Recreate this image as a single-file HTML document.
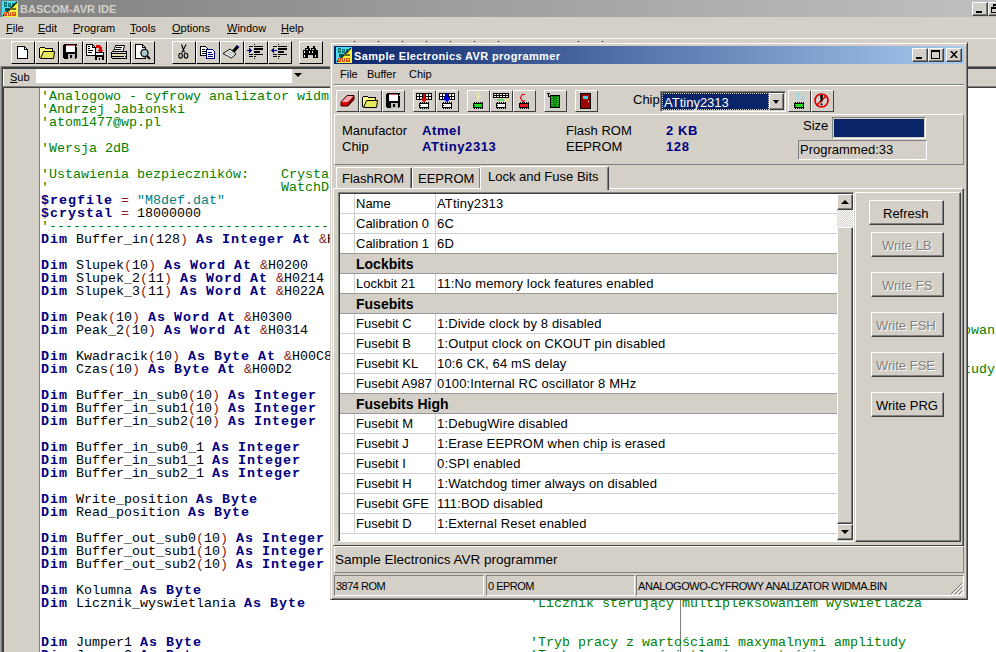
<!DOCTYPE html>
<html><head><meta charset="utf-8">
<style>
*{box-sizing:border-box}
html,body{margin:0;padding:0}
body{width:996px;height:652px;overflow:hidden;position:relative;background:#d4d0c8;font-family:"Liberation Sans",sans-serif;color:#000}
.a{position:absolute}
.t{position:absolute;white-space:pre;line-height:1}
/* raised button win2000 */
.rb{position:absolute;background:#d4d0c8;border-top:1px solid #fff;border-left:1px solid #fff;border-right:1px solid #404040;border-bottom:1px solid #404040;box-shadow:inset -1px -1px 0 #808080}
.sunk{position:absolute;border-top:1px solid #808080;border-left:1px solid #808080;border-right:1px solid #fff;border-bottom:1px solid #fff}
.tb{position:absolute;width:24px;height:23px;background:#d4d0c8;border-top:1px solid #fff;border-left:1px solid #fff;border-right:1px solid #000;border-bottom:1px solid #000}
.tb svg{position:absolute;left:3px;top:2px}
.code{position:absolute;left:41px;font-family:"Liberation Mono",monospace;font-size:13.333px;line-height:13px;white-space:pre;color:#000}
.k{color:#000080;font-weight:bold;letter-spacing:1px}
.c{color:#008000}
.o{color:#8b2424}
.s{color:#008080}
.mi{position:absolute;font-size:11px;top:23px;line-height:1}
.u{text-decoration:underline}
</style></head><body>

<!-- MAIN TITLE -->
<div class="a" style="left:0;top:0;width:996px;height:17px;background:linear-gradient(to right,#808080,#c0c0c0)"></div>
<div id="mainicon" class="a" style="left:2px;top:1px;width:16px;height:16px"><svg width="16" height="16" viewBox="0 0 16 16" shape-rendering="crispEdges" style="position:absolute;left:0;top:0"><rect width="16" height="16" fill="#f8f040"/><path d="M0 0H16L0 16Z" fill="#48e0f0"/><path d="M2 1h3v5h-3zM6 2h3v4h-3zM10 2h2v4h-2z" fill="#107878"/><path d="M3 3h1v1h-1zM7 3h1v1h-1z" fill="#48e0f0"/><path d="M15 1L1 15" stroke="#002020" stroke-width="1.4" shape-rendering="auto"/><path d="M3 7h4v3h-4z" fill="#004848"/><path d="M8 7h6v2h-6z" fill="#6a7020"/><path d="M2 11h3v4h-3zM6 11h3v4h-3zM10 11h4v4h-4z" fill="#e05010"/><path d="M3 12h1v1h-1zM7 11h1v3h-1zM11 12h2v1h-2z" fill="#f8f040"/></svg></div>
<div class="t" style="left:20px;top:4px;font-size:11px;font-weight:bold;color:#d4d0c8">BASCOM-AVR IDE</div>
<div class="rb" style="left:972px;top:2px;width:16px;height:14px"></div>
<div class="a" style="left:976px;top:11px;width:6px;height:2px;background:#000"></div>
<div class="rb" style="left:988px;top:2px;width:16px;height:14px"></div>
<div class="a" style="left:993px;top:4px;width:8px;height:6px;border:1px solid #000;border-top-width:2px"></div>
<div class="a" style="left:991px;top:7px;width:8px;height:6px;background:#d4d0c8;border:1px solid #000;border-top-width:2px"></div>

<!-- MAIN MENU -->
<div class="mi" style="left:6px"><span class="u">F</span>ile</div>
<div class="mi" style="left:38px"><span class="u">E</span>dit</div>
<div class="mi" style="left:73px"><span class="u">P</span>rogram</div>
<div class="mi" style="left:130px"><span class="u">T</span>ools</div>
<div class="mi" style="left:172px"><span class="u">O</span>ptions</div>
<div class="mi" style="left:227px"><span class="u">W</span>indow</div>
<div class="mi" style="left:281px"><span class="u">H</span>elp</div>

<!-- toolbar line -->
<div class="a" style="left:0;top:38px;width:996px;height:1px;background:#fff"></div>

<div id="maintb">
<div class="tb" style="left:11px;top:41px"></div>
<div class="tb" style="left:35px;top:41px"></div>
<div class="tb" style="left:59px;top:41px"></div>
<div class="tb" style="left:83px;top:41px"></div>
<div class="tb" style="left:107px;top:41px"></div>
<div class="tb" style="left:131px;top:41px"></div>
<div class="tb" style="left:172px;top:41px"></div>
<div class="tb" style="left:196px;top:41px"></div>
<div class="tb" style="left:220px;top:41px"></div>
<div class="tb" style="left:244px;top:41px"></div>
<div class="tb" style="left:268px;top:41px"></div>
<div class="tb" style="left:299px;top:41px"></div>
<svg class="a" style="left:0;top:0" width="330" height="66" viewBox="0 0 330 66" shape-rendering="crispEdges">
<!-- new -->
<path d="M17.5 46.5H24.5L27.5 49.5V58.5H17.5Z" fill="#fff" stroke="#000"/>
<path d="M24.5 46.5V49.5H27.5" fill="none" stroke="#000"/>
<!-- open -->
<path d="M39.5 57.5V48.5L40.5 47.5H44.5L45.5 48.5H52.5V51" fill="#ffff80" stroke="#000"/>
<path d="M40.5 58.5H53.5L54.5 51.5H43.5Z" fill="#e8e860" stroke="#000" shape-rendering="auto"/>
<!-- save -->
<path d="M63 45h1v-1h13v14h-1v1h-12v-1h-1z" fill="#000"/>
<rect x="66" y="45" width="9" height="7" fill="#fff"/>
<rect x="66" y="45" width="9" height="1" fill="#d06060"/>
<rect x="68" y="54" width="7" height="5" fill="#c0c0c0"/>
<rect x="70" y="55" width="2" height="3" fill="#000"/>
<rect x="76" y="46" width="1" height="1" fill="#fff"/>
<!-- save as -->
<path d="M86.5 44.5H92.5L95.5 47.5V55.5H86.5Z" fill="#fff" stroke="#000"/>
<path d="M92.5 44.5V47.5H95.5" fill="none" stroke="#000"/>
<path d="M88 46h2M88 48h2M88 50h5M88 52h4" stroke="#000"/>
<path d="M96 45h3l2 1l1 2v2h2l-3.5 3l-3.5-3h2v-1l-1-1h-2z" fill="#e00000"/>
<rect x="95" y="52" width="9" height="8" fill="#000"/>
<rect x="96" y="53" width="7" height="2" fill="#fff"/>
<rect x="97" y="57" width="5" height="3" fill="#c0c0c0"/>
<rect x="99" y="58" width="1" height="2" fill="#000"/>
<!-- print -->
<path d="M115.5 45.5H124.5L123 51.5H113.5Z" fill="#fff" stroke="#000" shape-rendering="auto"/>
<path d="M116 47h6M115 49h6" stroke="#000"/>
<path d="M112.5 51.5H126.5V58.5H112.5L111.5 57.5V52.5Z" fill="#d4d0c8" stroke="#000"/>
<rect x="112" y="54" width="11" height="2" fill="#e8e0b0"/>
<path d="M112 53.5h14M112 56.5h14" stroke="#000"/>
<path d="M124 52h1v1h-1zM125 54h1v1h-1zM124 56h1v1h-1z" fill="#fff"/>
<!-- preview -->
<path d="M135.5 44.5H142.5L145.5 47.5V58.5H135.5Z" fill="#fff" stroke="#000"/>
<path d="M142.5 44.5V47.5H145.5" fill="none" stroke="#000"/>
<circle cx="144.5" cy="53" r="3.6" fill="#a8c8c8" stroke="#000" stroke-width="1.2" shape-rendering="auto"/>
<path d="M147 56l3 3" stroke="#000" stroke-width="2" shape-rendering="auto"/>
<!-- cut -->
<g shape-rendering="auto" fill="none" stroke="#000" stroke-width="1.1">
<path d="M181.5 44.5L184.5 52.5M186 44.5L182 52.5"/>
<ellipse cx="180.6" cy="55.7" rx="1.8" ry="2.4"/>
<ellipse cx="186" cy="55.7" rx="1.8" ry="2.4"/>
</g>
<!-- copy -->
<path d="M200.5 46.5H205.5L207.5 48.5V55.5H200.5Z" fill="#fff" stroke="#000"/>
<path d="M202 49h3M202 51h4M202 53h4" stroke="#000"/>
<path d="M206.5 49.5H212.5L214.5 51.5V58.5H206.5Z" fill="#fff" stroke="#000080"/>
<path d="M208 52h4M208 54h5M208 56h5" stroke="#000080"/>
<!-- brush -->
<g shape-rendering="auto">
<path d="M223 53.5L230 49L236 54L231.5 58Z" fill="#fff" stroke="#000" stroke-width="1"/>
<path d="M225 54l5 3.2M226.8 52.5l5 3.4M228.5 51.2l5 3.3" stroke="#808080" stroke-width="0.9"/>
<path d="M232 50.5L236.5 45.5L239 47.5L234.5 52.5Z" fill="#000"/>
<path d="M236.5 45.5L239 47.5" stroke="#000080" stroke-width="1.5"/>
</g>
<!-- indent -->
<rect x="249" y="46" width="4" height="1" fill="#000"/><rect x="254" y="46" width="9" height="1" fill="#000"/><rect x="254" y="48" width="9" height="2" fill="#000"/><rect x="254" y="51" width="6" height="2" fill="#000"/><rect x="249" y="54" width="4" height="1" fill="#000"/><rect x="254" y="54" width="9" height="1" fill="#000"/><rect x="249" y="56" width="4" height="1" fill="#000"/><rect x="254" y="56" width="2" height="1" fill="#000"/><rect x="254" y="44" width="1" height="1" fill="#000"/><rect x="254" y="58" width="1" height="1" fill="#000"/>
<rect x="247" y="50" width="4" height="1" fill="#000080"/><rect x="249" y="48" width="1" height="5" fill="#000080"/><rect x="250" y="49" width="1" height="3" fill="#000080"/><rect x="251" y="50" width="1" height="1" fill="#000080"/>
<!-- outdent -->
<rect x="273" y="46" width="4" height="1" fill="#000"/><rect x="278" y="46" width="9" height="1" fill="#000"/><rect x="278" y="48" width="9" height="2" fill="#000"/><rect x="278" y="51" width="6" height="2" fill="#000"/><rect x="273" y="54" width="4" height="1" fill="#000"/><rect x="278" y="54" width="9" height="1" fill="#000"/><rect x="273" y="56" width="4" height="1" fill="#000"/><rect x="278" y="56" width="2" height="1" fill="#000"/><rect x="278" y="44" width="1" height="1" fill="#000"/><rect x="278" y="58" width="1" height="1" fill="#000"/>
<rect x="272" y="50" width="5" height="1" fill="#000080"/><rect x="273" y="48" width="1" height="5" fill="#000080"/><rect x="272" y="49" width="1" height="3" fill="#000080"/><rect x="271" y="50" width="1" height="1" fill="#000080"/>
<!-- binoculars -->
<rect x="307" y="46" width="2" height="2" fill="#000"/><rect x="313" y="46" width="2" height="2" fill="#000"/><rect x="305" y="48" width="5" height="2" fill="#000"/><rect x="311" y="48" width="5" height="2" fill="#000"/><rect x="303" y="50" width="5" height="8" fill="#000"/><rect x="313" y="50" width="5" height="8" fill="#000"/><rect x="307" y="50" width="6" height="5" fill="#000"/><rect x="304" y="51" width="1" height="2" fill="#fff"/><rect x="309" y="51" width="1" height="2" fill="#e0e0e0"/><rect x="312" y="51" width="1" height="2" fill="#e0e0e0"/><rect x="304" y="55" width="1" height="2" fill="#fff"/><rect x="315" y="55" width="1" height="2" fill="#fff"/><rect x="306" y="49" width="2" height="1" fill="#c0c0c0"/><rect x="312" y="49" width="2" height="1" fill="#c0c0c0"/>
</svg>

</div>

<!-- MDI child frame -->
<div class="a" style="left:0;top:66px;width:996px;height:1px;background:#808080"></div>
<div class="a" style="left:0;top:67px;width:996px;height:2px;background:#404040"></div>
<div class="a" style="left:0;top:66px;width:1px;height:586px;background:#a0a0a0"></div>
<div class="a" style="left:1px;top:66px;width:1px;height:586px;background:#808080"></div>
<div class="a" style="left:2px;top:67px;width:2px;height:585px;background:#404040"></div>

<!-- Sub bar -->
<div class="a" style="left:3px;top:69px;width:993px;height:17px;background:#d4d0c8;border-left:1px solid #fff"></div>
<div class="t" style="left:10px;top:72px;font-size:11px"><span class="u">S</span>ub</div>
<div class="a" style="left:36px;top:69px;width:269px;height:14px;background:#fff"></div>
<div class="a" style="left:292px;top:69px;width:13px;height:14px;background:#d4d0c8"></div>
<div class="a" style="left:294px;top:73px;width:0;height:0;border-left:4px solid transparent;border-right:4px solid transparent;border-top:4px solid #000"></div>

<!-- Editor -->
<div class="a" style="left:3px;top:86px;width:993px;height:1px;background:#808080"></div><div class="a" style="left:3px;top:87px;width:993px;height:1px;background:#404040"></div>
<div class="a" style="left:4px;top:88px;width:35px;height:564px;background:#d4d0c8"></div>
<div class="a" style="left:39px;top:88px;width:1px;height:564px;background:#808080"></div>
<div class="a" style="left:40px;top:88px;width:956px;height:564px;background:#fff"></div>
<div class="a" style="left:680px;top:596px;width:1px;height:56px;background:#808080"></div>

<div id="code">
<div class="code" style="top:90px"><span class="c">&#x27;Analogowo - cyfrowy analizator widma akustycznego</span></div>
<div class="code" style="top:103px"><span class="c">&#x27;Andrzej Jabłonski</span></div>
<div class="code" style="top:116px"><span class="c">&#x27;atom1477@wp.pl</span></div>
<div class="code" style="top:142px"><span class="c">&#x27;Wersja 2dB</span></div>
<div class="code" style="top:168px"><span class="c">&#x27;Ustawienia bezpieczników:    Crystal</span></div>
<div class="code" style="top:181px"><span class="c">&#x27;                             WatchDog</span></div>
<div class="code" style="top:194px"><span class="k">$regfile</span> <span class="o">=</span> <span class="s">&quot;M8def.dat&quot;</span></div>
<div class="code" style="top:207px"><span class="k">$crystal</span> <span class="o">=</span> 18000000</div>
<div class="code" style="top:220px"><span class="c">&#x27;----------------------------------------------------------------------</span></div>
<div class="code" style="top:233px"><span class="k">Dim</span> Buffer_in<span class="o">(</span>128<span class="o">)</span> <span class="k">As</span> <span class="k">Integer</span> <span class="k">At</span> <span class="o">&amp;</span>H0100</div>
<div class="code" style="top:259px"><span class="k">Dim</span> Slupek<span class="o">(</span>10<span class="o">)</span> <span class="k">As</span> <span class="k">Word</span> <span class="k">At</span> <span class="o">&amp;</span>H0200</div>
<div class="code" style="top:272px"><span class="k">Dim</span> Slupek_2<span class="o">(</span>11<span class="o">)</span> <span class="k">As</span> <span class="k">Word</span> <span class="k">At</span> <span class="o">&amp;</span>H0214</div>
<div class="code" style="top:285px"><span class="k">Dim</span> Slupek_3<span class="o">(</span>11<span class="o">)</span> <span class="k">As</span> <span class="k">Word</span> <span class="k">At</span> <span class="o">&amp;</span>H022A</div>
<div class="code" style="top:311px"><span class="k">Dim</span> Peak<span class="o">(</span>10<span class="o">)</span> <span class="k">As</span> <span class="k">Word</span> <span class="k">At</span> <span class="o">&amp;</span>H0300</div>
<div class="code" style="top:324px"><span class="k">Dim</span> Peak_2<span class="o">(</span>10<span class="o">)</span> <span class="k">As</span> <span class="k">Word</span> <span class="k">At</span> <span class="o">&amp;</span>H0314</div>
<div class="code c" style="top:324px;left:963px">owan</div>
<div class="code" style="top:350px"><span class="k">Dim</span> Kwadracik<span class="o">(</span>10<span class="o">)</span> <span class="k">As</span> <span class="k">Byte</span> <span class="k">At</span> <span class="o">&amp;</span>H00C8</div>
<div class="code" style="top:363px"><span class="k">Dim</span> Czas<span class="o">(</span>10<span class="o">)</span> <span class="k">As</span> <span class="k">Byte</span> <span class="k">At</span> <span class="o">&amp;</span>H00D2</div>
<div class="code c" style="top:363px;left:963px">tudy</div>
<div class="code" style="top:389px"><span class="k">Dim</span> Buffer_in_sub0<span class="o">(</span>10<span class="o">)</span> <span class="k">As</span> <span class="k">Integer</span></div>
<div class="code" style="top:402px"><span class="k">Dim</span> Buffer_in_sub1<span class="o">(</span>10<span class="o">)</span> <span class="k">As</span> <span class="k">Integer</span></div>
<div class="code" style="top:415px"><span class="k">Dim</span> Buffer_in_sub2<span class="o">(</span>10<span class="o">)</span> <span class="k">As</span> <span class="k">Integer</span></div>
<div class="code" style="top:441px"><span class="k">Dim</span> Buffer_in_sub0_1 <span class="k">As</span> <span class="k">Integer</span></div>
<div class="code" style="top:454px"><span class="k">Dim</span> Buffer_in_sub1_1 <span class="k">As</span> <span class="k">Integer</span></div>
<div class="code" style="top:467px"><span class="k">Dim</span> Buffer_in_sub2_1 <span class="k">As</span> <span class="k">Integer</span></div>
<div class="code" style="top:493px"><span class="k">Dim</span> Write_position <span class="k">As</span> <span class="k">Byte</span></div>
<div class="code" style="top:506px"><span class="k">Dim</span> Read_position <span class="k">As</span> <span class="k">Byte</span></div>
<div class="code" style="top:532px"><span class="k">Dim</span> Buffer_out_sub0<span class="o">(</span>10<span class="o">)</span> <span class="k">As</span> <span class="k">Integer</span></div>
<div class="code" style="top:545px"><span class="k">Dim</span> Buffer_out_sub1<span class="o">(</span>10<span class="o">)</span> <span class="k">As</span> <span class="k">Integer</span></div>
<div class="code" style="top:558px"><span class="k">Dim</span> Buffer_out_sub2<span class="o">(</span>10<span class="o">)</span> <span class="k">As</span> <span class="k">Integer</span></div>
<div class="code" style="top:584px"><span class="k">Dim</span> Kolumna <span class="k">As</span> <span class="k">Byte</span></div>
<div class="code" style="top:597px"><span class="k">Dim</span> Licznik_wyswietlania <span class="k">As</span> <span class="k">Byte</span></div>
<div class="code c" style="top:597px;left:530px">&#x27;Licznik sterujący multipleksowaniem wyswietlacza</div>
<div class="code" style="top:636px"><span class="k">Dim</span> Jumper1 <span class="k">As</span> <span class="k">Byte</span></div>
<div class="code c" style="top:636px;left:530px">&#x27;Tryb pracy z wartościami maxymalnymi amplitudy</div>
<div class="code" style="top:649px"><span class="k">Dim</span> Jumper2 <span class="k">As</span> <span class="k">Byte</span></div>
<div class="code c" style="top:649px;left:530px">&#x27;Tryb pracy z wyświetlaniem wartości</div>
</div>

<div id="dots"><div class="a" style="left:354px;top:41px;width:1px;height:1px;background:#000"></div><div class="a" style="left:378px;top:41px;width:1px;height:1px;background:#000"></div><div class="a" style="left:402px;top:41px;width:1px;height:1px;background:#000"></div><div class="a" style="left:426px;top:41px;width:1px;height:1px;background:#000"></div><div class="a" style="left:450px;top:41px;width:1px;height:1px;background:#000"></div><div class="a" style="left:474px;top:41px;width:1px;height:1px;background:#000"></div><div class="a" style="left:498px;top:41px;width:1px;height:1px;background:#000"></div><div class="a" style="left:578px;top:41px;width:1px;height:1px;background:#000"></div><div class="a" style="left:602px;top:41px;width:1px;height:1px;background:#000"></div></div>
<div id="dialog">
<!-- DIALOG -->
<div class="a" style="left:330px;top:42px;width:638px;height:558px;background:#d4d0c8;border-top:1px solid #d4d0c8;border-left:1px solid #d4d0c8;border-right:1px solid #404040;border-bottom:1px solid #404040;box-shadow:inset 1px 1px 0 #fff,inset -1px -1px 0 #808080"></div>
<div class="a" style="left:334px;top:46px;width:630px;height:18px;background:linear-gradient(to right,#0a246a,#a6caf0)"></div>
<div id="dlgicon" class="a" style="left:336px;top:47px;width:16px;height:16px"><svg width="16" height="16" viewBox="0 0 16 16" shape-rendering="crispEdges" style="position:absolute;left:0;top:0"><rect width="16" height="16" fill="#f8f040"/><path d="M0 0H16L0 16Z" fill="#48e0f0"/><path d="M2 1h3v5h-3zM6 2h3v4h-3zM10 2h2v4h-2z" fill="#107878"/><path d="M3 3h1v1h-1zM7 3h1v1h-1z" fill="#48e0f0"/><path d="M15 1L1 15" stroke="#002020" stroke-width="1.4" shape-rendering="auto"/><path d="M3 7h4v3h-4z" fill="#004848"/><path d="M8 7h6v2h-6z" fill="#6a7020"/><path d="M2 11h3v4h-3zM6 11h3v4h-3zM10 11h4v4h-4z" fill="#e05010"/><path d="M3 12h1v1h-1zM7 11h1v3h-1zM11 12h2v1h-2z" fill="#f8f040"/></svg></div>
<div class="t" style="left:354px;top:51px;font-size:11px;font-weight:bold;color:#fff;letter-spacing:0.36px">Sample Electronics AVR programmer</div>
<div class="rb" style="left:912px;top:48px;width:16px;height:14px"></div>
<div class="a" style="left:916px;top:57px;width:6px;height:2px;background:#000"></div>
<div class="rb" style="left:928px;top:48px;width:16px;height:14px"></div>
<div class="a" style="left:931px;top:50px;width:9px;height:9px;border:1px solid #000;border-top-width:2px"></div>
<div class="rb" style="left:946px;top:48px;width:16px;height:14px"></div>
<svg class="a" style="left:950px;top:51px" width="8" height="7" viewBox="0 0 8 7"><path d="M0 0h2l2 2.5L6 0h2L5 3.5L8 7H6L4 4.5L2 7H0l3-3.5z" fill="#000"/></svg>

<!-- dialog menu -->
<div class="t" style="left:340px;top:69px;font-size:11px">File</div>
<div class="t" style="left:367px;top:69px;font-size:11px">Buffer</div>
<div class="t" style="left:409px;top:69px;font-size:11px">Chip</div>
<div class="a" style="left:334px;top:84px;width:630px;height:1px;background:#808080"></div>
<div class="a" style="left:334px;top:85px;width:630px;height:1px;background:#fff"></div>

<!-- dialog toolbar -->
<div id="dlgtb">
<div class="tb" style="left:336px;top:90px;width:23px;height:22px;border-right-color:#404040;border-bottom-color:#404040"></div>
<div class="tb" style="left:359px;top:90px;width:23px;height:22px;border-right-color:#404040;border-bottom-color:#404040"></div>
<div class="tb" style="left:382px;top:90px;width:23px;height:22px;border-right-color:#404040;border-bottom-color:#404040"></div>
<div class="tb" style="left:413px;top:90px;width:23px;height:22px;border-right-color:#404040;border-bottom-color:#404040"></div>
<div class="tb" style="left:436px;top:90px;width:23px;height:22px;border-right-color:#404040;border-bottom-color:#404040"></div>
<div class="tb" style="left:467px;top:90px;width:23px;height:22px;border-right-color:#404040;border-bottom-color:#404040"></div>
<div class="tb" style="left:490px;top:90px;width:23px;height:22px;border-right-color:#404040;border-bottom-color:#404040"></div>
<div class="tb" style="left:513px;top:90px;width:23px;height:22px;border-right-color:#404040;border-bottom-color:#404040"></div>
<div class="tb" style="left:544px;top:90px;width:23px;height:22px;border-right-color:#404040;border-bottom-color:#404040"></div>
<div class="tb" style="left:575px;top:90px;width:23px;height:22px;border-right-color:#404040;border-bottom-color:#404040"></div>
<div class="tb" style="left:788px;top:90px;width:23px;height:22px;border-right-color:#404040;border-bottom-color:#404040"></div>
<div class="tb" style="left:811px;top:90px;width:23px;height:22px;border-right-color:#404040;border-bottom-color:#404040"></div>
<svg class="a" style="left:330px;top:86px" width="520" height="28" viewBox="330 86 520 28" shape-rendering="crispEdges"><g shape-rendering="auto"><path d="M347 95.5H354L348 102H341Z" fill="#ff9090"/><path d="M348 96.5l1 1M350 96.5l1 1M346 98.5l1 1M348 98.5l1 1M350 98.5l1 1M344 100.5l1 1M346 100.5l1 1" stroke="#fff" stroke-width="1"/><path d="M341 102H348V106H341Z" fill="#e00000"/><path d="M348 102L354 95.5V99.5L348 106Z" fill="#900000"/><path d="M347 95.5H354V99.5L348 106H341V102Z" fill="none" stroke="#300000" stroke-width="1"/></g>
<path d="M362.5 106.5V97.5L363.5 96.5H367.5L368.5 97.5H375.5V100" fill="#ffff80" stroke="#000"/><path d="M363.5 107.5H376.5L377.5 100.5H366.5Z" fill="#e8e860" stroke="#000" shape-rendering="auto"/>
<path d="M386 94h1v-1h13v14h-1v1h-12v-1h-1z" fill="#000"/><rect x="389" y="94" width="9" height="7" fill="#fff"/><rect x="389" y="94" width="9" height="1" fill="#d06060"/><rect x="391" y="103" width="7" height="5" fill="#c0c0c0"/><rect x="393" y="104" width="2" height="3" fill="#000"/><rect x="399" y="95" width="1" height="1" fill="#fff"/>
<rect x="416" y="93" width="16" height="7" fill="#000"/><rect x="417" y="94" width="2" height="2" fill="#fff"/><rect x="417" y="97" width="2" height="2" fill="#fff"/><rect x="420" y="94" width="2" height="2" fill="#fff"/><rect x="420" y="97" width="2" height="2" fill="#fff"/><rect x="423" y="94" width="2" height="2" fill="#fff"/><rect x="423" y="97" width="2" height="2" fill="#fff"/><rect x="426" y="94" width="2" height="2" fill="#fff"/><rect x="426" y="97" width="2" height="2" fill="#fff"/><rect x="429" y="94" width="2" height="2" fill="#fff"/><rect x="429" y="97" width="2" height="2" fill="#fff"/><rect x="423" y="94" width="2" height="5" fill="#e00000"/><path d="M420.5 98.5H427.5L424 102.5Z" fill="#e00000" shape-rendering="auto"/><rect x="419" y="103" width="10" height="5" fill="#000"/><rect x="420" y="104" width="8" height="3" fill="#fff"/><rect x="420" y="105" width="1" height="1" fill="#000"/><rect x="420" y="102" width="1" height="1" fill="#000"/><rect x="420" y="108" width="1" height="1" fill="#000"/><rect x="422" y="102" width="1" height="1" fill="#000"/><rect x="422" y="108" width="1" height="1" fill="#000"/><rect x="424" y="102" width="1" height="1" fill="#000"/><rect x="424" y="108" width="1" height="1" fill="#000"/><rect x="426" y="102" width="1" height="1" fill="#000"/><rect x="426" y="108" width="1" height="1" fill="#000"/><rect x="428" y="102" width="1" height="1" fill="#000"/><rect x="428" y="108" width="1" height="1" fill="#000"/>
<rect x="439" y="93" width="16" height="7" fill="#000"/><rect x="440" y="94" width="2" height="2" fill="#fff"/><rect x="440" y="97" width="2" height="2" fill="#fff"/><rect x="443" y="94" width="2" height="2" fill="#fff"/><rect x="443" y="97" width="2" height="2" fill="#fff"/><rect x="446" y="94" width="2" height="2" fill="#fff"/><rect x="446" y="97" width="2" height="2" fill="#fff"/><rect x="449" y="94" width="2" height="2" fill="#fff"/><rect x="449" y="97" width="2" height="2" fill="#fff"/><rect x="452" y="94" width="2" height="2" fill="#fff"/><rect x="452" y="97" width="2" height="2" fill="#fff"/><rect x="446" y="93" width="2" height="6" fill="#0000e0"/><rect x="444" y="97" width="6" height="2" fill="#0000e0"/><path d="M443.5 98.5H450.5L447 102.5Z" fill="#0000e0" shape-rendering="auto"/><rect x="442" y="103" width="10" height="5" fill="#000"/><rect x="443" y="104" width="8" height="3" fill="#fff"/><rect x="443" y="105" width="1" height="1" fill="#000"/><rect x="443" y="102" width="1" height="1" fill="#000"/><rect x="443" y="108" width="1" height="1" fill="#000"/><rect x="445" y="102" width="1" height="1" fill="#000"/><rect x="445" y="108" width="1" height="1" fill="#000"/><rect x="447" y="102" width="1" height="1" fill="#000"/><rect x="447" y="108" width="1" height="1" fill="#000"/><rect x="449" y="102" width="1" height="1" fill="#000"/><rect x="449" y="108" width="1" height="1" fill="#000"/><rect x="451" y="102" width="1" height="1" fill="#000"/><rect x="451" y="108" width="1" height="1" fill="#000"/>
<rect x="476" y="93" width="4" height="1" fill="#e8e8a0"/><rect x="477" y="94" width="2" height="6" fill="#e8e8a0"/><rect x="479" y="96" width="3" height="1" fill="#e0e0b0"/><rect x="473" y="103" width="10" height="5" fill="#000"/><rect x="474" y="104" width="8" height="3" fill="#20e020"/><rect x="474" y="105" width="1" height="1" fill="#000"/><rect x="474" y="102" width="1" height="1" fill="#000"/><rect x="474" y="108" width="1" height="1" fill="#000"/><rect x="476" y="102" width="1" height="1" fill="#000"/><rect x="476" y="108" width="1" height="1" fill="#000"/><rect x="478" y="102" width="1" height="1" fill="#000"/><rect x="478" y="108" width="1" height="1" fill="#000"/><rect x="480" y="102" width="1" height="1" fill="#000"/><rect x="480" y="108" width="1" height="1" fill="#000"/><rect x="482" y="102" width="1" height="1" fill="#000"/><rect x="482" y="108" width="1" height="1" fill="#000"/>
<rect x="493" y="93" width="16" height="5" fill="#000"/><rect x="494" y="94" width="2" height="1" fill="#fff"/><rect x="494" y="96" width="2" height="1" fill="#fff"/><rect x="497" y="94" width="2" height="1" fill="#fff"/><rect x="497" y="96" width="2" height="1" fill="#fff"/><rect x="500" y="94" width="2" height="1" fill="#fff"/><rect x="500" y="96" width="2" height="1" fill="#fff"/><rect x="503" y="94" width="2" height="1" fill="#fff"/><rect x="503" y="96" width="2" height="1" fill="#fff"/><rect x="506" y="94" width="2" height="1" fill="#fff"/><rect x="506" y="96" width="2" height="1" fill="#fff"/><rect x="497" y="99" width="7" height="2" fill="#60e060"/><rect x="506" y="99" width="2" height="2" fill="#e8e880"/><rect x="505" y="101" width="2" height="1" fill="#e8e880"/><rect x="496" y="103" width="10" height="5" fill="#000"/><rect x="497" y="104" width="8" height="3" fill="#fff"/><rect x="497" y="105" width="1" height="1" fill="#000"/><rect x="497" y="102" width="1" height="1" fill="#000"/><rect x="497" y="108" width="1" height="1" fill="#000"/><rect x="499" y="102" width="1" height="1" fill="#000"/><rect x="499" y="108" width="1" height="1" fill="#000"/><rect x="501" y="102" width="1" height="1" fill="#000"/><rect x="501" y="108" width="1" height="1" fill="#000"/><rect x="503" y="102" width="1" height="1" fill="#000"/><rect x="503" y="108" width="1" height="1" fill="#000"/><rect x="505" y="102" width="1" height="1" fill="#000"/><rect x="505" y="108" width="1" height="1" fill="#000"/>
<path d="M525 94.8a2.8 3.4 0 1 0 0 5.8" fill="none" stroke="#e00000" stroke-width="1.1" shape-rendering="auto"/><rect x="523" y="101" width="1" height="2" fill="#e00000"/><rect x="519" y="103" width="10" height="5" fill="#000"/><rect x="520" y="104" width="8" height="3" fill="#e02020"/><rect x="520" y="102" width="1" height="1" fill="#000"/><rect x="520" y="108" width="1" height="1" fill="#000"/><rect x="522" y="102" width="1" height="1" fill="#000"/><rect x="522" y="108" width="1" height="1" fill="#000"/><rect x="524" y="102" width="1" height="1" fill="#000"/><rect x="524" y="108" width="1" height="1" fill="#000"/><rect x="526" y="102" width="1" height="1" fill="#000"/><rect x="526" y="108" width="1" height="1" fill="#000"/><rect x="528" y="102" width="1" height="1" fill="#000"/><rect x="528" y="108" width="1" height="1" fill="#000"/>
<rect x="547" y="93" width="3" height="1" fill="#000"/><rect x="548" y="94" width="1" height="3" fill="#000"/><rect x="548" y="96" width="3" height="1" fill="#000"/><rect x="550" y="95" width="10" height="13" fill="#000"/><rect x="551" y="96" width="8" height="11" fill="#008000"/><rect x="551" y="97" width="2" height="1" fill="#40c040"/><rect x="557" y="97" width="2" height="1" fill="#40c040"/><rect x="551" y="99" width="2" height="1" fill="#40c040"/><rect x="557" y="99" width="2" height="1" fill="#40c040"/><rect x="551" y="101" width="2" height="1" fill="#40c040"/><rect x="557" y="101" width="2" height="1" fill="#40c040"/><rect x="551" y="103" width="2" height="1" fill="#40c040"/><rect x="557" y="103" width="2" height="1" fill="#40c040"/><rect x="551" y="105" width="2" height="1" fill="#40c040"/><rect x="557" y="105" width="2" height="1" fill="#40c040"/><path d="M553 97l4 9M557 97l-4 9" stroke="#30a030" stroke-width="0.8" shape-rendering="auto"/>
<rect x="580" y="93" width="11" height="16" fill="#000"/><rect x="581" y="94" width="9" height="14" fill="#a00000"/><rect x="583" y="96" width="5" height="3" fill="#40d0f0"/><rect x="588" y="101" width="1" height="1" fill="#fff"/>
<rect x="796" y="93" width="5" height="1" fill="#90d8e0"/><rect x="798" y="94" width="1" height="6" fill="#90d8e0"/><circle cx="803" cy="98" r="1.8" fill="none" stroke="#90d8e0" stroke-width="1" shape-rendering="auto"/><rect x="794" y="103" width="10" height="5" fill="#000"/><rect x="795" y="104" width="8" height="3" fill="#20e020"/><rect x="795" y="105" width="1" height="1" fill="#000"/><rect x="795" y="102" width="1" height="1" fill="#000"/><rect x="795" y="108" width="1" height="1" fill="#000"/><rect x="797" y="102" width="1" height="1" fill="#000"/><rect x="797" y="108" width="1" height="1" fill="#000"/><rect x="799" y="102" width="1" height="1" fill="#000"/><rect x="799" y="108" width="1" height="1" fill="#000"/><rect x="801" y="102" width="1" height="1" fill="#000"/><rect x="801" y="108" width="1" height="1" fill="#000"/><rect x="803" y="102" width="1" height="1" fill="#000"/><rect x="803" y="108" width="1" height="1" fill="#000"/>
<g shape-rendering="auto"><circle cx="821.5" cy="100.5" r="6.5" fill="none" stroke="#e00000" stroke-width="1.7"/><path d="M816.5 105.5L826.5 95.5" stroke="#e00000" stroke-width="1.7"/><path d="M820 95h3l-0.8 7h-1.4z" fill="#000"/><circle cx="821.5" cy="104.3" r="1.1" fill="#000"/></g></svg>
</div>
<div class="t" style="left:633px;top:93px;font-size:13px">Chip</div>
<div class="sunk" style="left:660px;top:91px;width:126px;height:21px;background:#fff;box-shadow:inset 1px 1px 0 #404040,inset -1px -1px 0 #d4d0c8"></div>
<div class="a" style="left:662px;top:93px;width:107px;height:17px;background:#0a246a;outline:1px dotted #d4d0c8;outline-offset:-1px"></div>
<div class="t" style="left:664px;top:96px;font-size:13px;color:#fff">ATtiny2313</div>
<div class="rb" style="left:769px;top:93px;width:15px;height:17px"></div>
<div class="a" style="left:773px;top:100px;width:0;height:0;border-left:3.5px solid transparent;border-right:3.5px solid transparent;border-top:4px solid #000"></div>

<!-- info panel -->
<div class="a" style="left:334px;top:114px;width:630px;height:51px;border-top:1px solid #fff;border-left:1px solid #fff;border-right:1px solid #808080;border-bottom:1px solid #808080"></div>
<div class="t" style="left:342px;top:124px;font-size:13px">Manufactor</div>
<div class="t" style="left:342px;top:140px;font-size:13px">Chip</div>
<div class="t" style="left:422px;top:124px;font-size:13px;font-weight:bold;color:#000080;letter-spacing:0.6px">Atmel</div>
<div class="t" style="left:422px;top:140px;font-size:13px;font-weight:bold;color:#000080;letter-spacing:0.6px">ATtiny2313</div>
<div class="t" style="left:566px;top:124px;font-size:13px">Flash ROM</div>
<div class="t" style="left:566px;top:140px;font-size:13px">EEPROM</div>
<div class="t" style="left:666px;top:124px;font-size:13px;font-weight:bold;color:#000080;letter-spacing:0.6px">2 KB</div>
<div class="t" style="left:666px;top:140px;font-size:13px;font-weight:bold;color:#000080;letter-spacing:0.6px">128</div>
<div class="t" style="left:803px;top:119px;font-size:13px">Size</div>
<div class="sunk" style="left:832px;top:117px;width:94px;height:22px;background:#0a246a;box-shadow:inset 1px 1px 0 #d4d0c8,inset -1px -1px 0 #d4d0c8"></div>
<div class="sunk" style="left:798px;top:140px;width:129px;height:20px"></div>
<div class="t" style="left:800px;top:143px;font-size:13px">Programmed:33</div>

<!-- tabs -->
<div class="a" style="left:333px;top:188px;width:631px;height:358px;border-top:1px solid #fff;border-left:1px solid #fff;border-right:1px solid #404040;border-bottom:1px solid #404040;box-shadow:inset -1px 0 0 #808080"></div>
<div class="a" style="left:336px;top:167px;width:76px;height:21px;background:#d4d0c8;border-top:1px solid #fff;border-left:1px solid #fff;border-right:1px solid #404040;border-radius:2px 2px 0 0;box-shadow:inset -1px 0 0 #808080"></div>
<div class="t" style="left:342px;top:172px;font-size:13px">FlashROM</div>
<div class="a" style="left:412px;top:167px;width:69px;height:21px;background:#d4d0c8;border-top:1px solid #fff;border-left:1px solid #fff;border-right:1px solid #404040;border-radius:2px 2px 0 0;box-shadow:inset -1px 0 0 #808080"></div>
<div class="t" style="left:418px;top:172px;font-size:13px">EEPROM</div>
<div class="a" style="left:480px;top:166px;width:129px;height:24px;background:#d4d0c8;border-top:1px solid #fff;border-left:1px solid #fff;border-right:1px solid #404040;border-radius:2px 2px 0 0;box-shadow:inset -1px 0 0 #808080"></div>
<div class="t" style="left:488px;top:170px;font-size:13px">Lock and Fuse Bits</div>

<!-- grid -->
<div class="a" style="left:338px;top:192px;width:516px;height:350px;border-top:1px solid #808080;border-left:1px solid #808080;border-right:1px solid #fff;border-bottom:1px solid #fff;box-shadow:inset 1px 1px 0 #404040"></div>
<div id="grid" class="a" style="left:340px;top:194px;width:497px;height:347px;background:#fff;overflow:hidden">
<div class="a" style="left:0;top:19px;width:497px;height:1px;background:#d0d0d0"></div>
<div class="a" style="left:14px;top:0px;width:1px;height:19px;background:#d0d0d0"></div>
<div class="a" style="left:95px;top:0px;width:1px;height:19px;background:#d0d0d0"></div>
<div class="t" style="left:16px;top:3px;font-size:13px">Name</div>
<div class="t" style="left:97px;top:3px;font-size:13px;letter-spacing:0.15px">ATtiny2313</div>
<div class="a" style="left:0;top:39px;width:497px;height:1px;background:#d0d0d0"></div>
<div class="a" style="left:14px;top:20px;width:1px;height:19px;background:#d0d0d0"></div>
<div class="a" style="left:95px;top:20px;width:1px;height:19px;background:#d0d0d0"></div>
<div class="t" style="left:16px;top:23px;font-size:13px">Calibration 0</div>
<div class="t" style="left:97px;top:23px;font-size:13px;letter-spacing:0.15px">6C</div>
<div class="a" style="left:0;top:59px;width:497px;height:1px;background:#d0d0d0"></div>
<div class="a" style="left:14px;top:40px;width:1px;height:19px;background:#d0d0d0"></div>
<div class="a" style="left:95px;top:40px;width:1px;height:19px;background:#d0d0d0"></div>
<div class="t" style="left:16px;top:43px;font-size:13px">Calibration 1</div>
<div class="t" style="left:97px;top:43px;font-size:13px;letter-spacing:0.15px">6D</div>
<div class="a" style="left:0;top:59px;width:497px;height:21px;background:#d4d0c8;border-top:1px solid #999;border-bottom:1px solid #999"></div>
<div class="t" style="left:16px;top:63px;font-size:14px;font-weight:bold">Lockbits</div>
<div class="a" style="left:0;top:99px;width:497px;height:1px;background:#d0d0d0"></div>
<div class="a" style="left:14px;top:80px;width:1px;height:19px;background:#d0d0d0"></div>
<div class="a" style="left:95px;top:80px;width:1px;height:19px;background:#d0d0d0"></div>
<div class="t" style="left:16px;top:83px;font-size:13px">Lockbit 21</div>
<div class="t" style="left:97px;top:83px;font-size:13px;letter-spacing:0.15px">11:No memory lock features enabled</div>
<div class="a" style="left:0;top:99px;width:497px;height:21px;background:#d4d0c8;border-top:1px solid #999;border-bottom:1px solid #999"></div>
<div class="t" style="left:16px;top:103px;font-size:14px;font-weight:bold">Fusebits</div>
<div class="a" style="left:0;top:139px;width:497px;height:1px;background:#d0d0d0"></div>
<div class="a" style="left:14px;top:120px;width:1px;height:19px;background:#d0d0d0"></div>
<div class="a" style="left:95px;top:120px;width:1px;height:19px;background:#d0d0d0"></div>
<div class="t" style="left:16px;top:123px;font-size:13px">Fusebit C</div>
<div class="t" style="left:97px;top:123px;font-size:13px;letter-spacing:0.15px">1:Divide clock by 8 disabled</div>
<div class="a" style="left:0;top:159px;width:497px;height:1px;background:#d0d0d0"></div>
<div class="a" style="left:14px;top:140px;width:1px;height:19px;background:#d0d0d0"></div>
<div class="a" style="left:95px;top:140px;width:1px;height:19px;background:#d0d0d0"></div>
<div class="t" style="left:16px;top:143px;font-size:13px">Fusebit B</div>
<div class="t" style="left:97px;top:143px;font-size:13px;letter-spacing:0.15px">1:Output clock on CKOUT pin disabled</div>
<div class="a" style="left:0;top:179px;width:497px;height:1px;background:#d0d0d0"></div>
<div class="a" style="left:14px;top:160px;width:1px;height:19px;background:#d0d0d0"></div>
<div class="a" style="left:95px;top:160px;width:1px;height:19px;background:#d0d0d0"></div>
<div class="t" style="left:16px;top:163px;font-size:13px">Fusebit KL</div>
<div class="t" style="left:97px;top:163px;font-size:13px;letter-spacing:0.15px">10:6 CK, 64 mS delay</div>
<div class="a" style="left:0;top:199px;width:497px;height:1px;background:#d0d0d0"></div>
<div class="a" style="left:14px;top:180px;width:1px;height:19px;background:#d0d0d0"></div>
<div class="a" style="left:95px;top:180px;width:1px;height:19px;background:#d0d0d0"></div>
<div class="t" style="left:16px;top:183px;font-size:13px">Fusebit A987</div>
<div class="t" style="left:97px;top:183px;font-size:13px;letter-spacing:0.15px">0100:Internal RC oscillator 8 MHz</div>
<div class="a" style="left:0;top:199px;width:497px;height:21px;background:#d4d0c8;border-top:1px solid #999;border-bottom:1px solid #999"></div>
<div class="t" style="left:16px;top:203px;font-size:14px;font-weight:bold">Fusebits High</div>
<div class="a" style="left:0;top:239px;width:497px;height:1px;background:#d0d0d0"></div>
<div class="a" style="left:14px;top:220px;width:1px;height:19px;background:#d0d0d0"></div>
<div class="a" style="left:95px;top:220px;width:1px;height:19px;background:#d0d0d0"></div>
<div class="t" style="left:16px;top:223px;font-size:13px">Fusebit M</div>
<div class="t" style="left:97px;top:223px;font-size:13px;letter-spacing:0.15px">1:DebugWire disabled</div>
<div class="a" style="left:0;top:259px;width:497px;height:1px;background:#d0d0d0"></div>
<div class="a" style="left:14px;top:240px;width:1px;height:19px;background:#d0d0d0"></div>
<div class="a" style="left:95px;top:240px;width:1px;height:19px;background:#d0d0d0"></div>
<div class="t" style="left:16px;top:243px;font-size:13px">Fusebit J</div>
<div class="t" style="left:97px;top:243px;font-size:13px;letter-spacing:0.15px">1:Erase EEPROM when chip is erased</div>
<div class="a" style="left:0;top:279px;width:497px;height:1px;background:#d0d0d0"></div>
<div class="a" style="left:14px;top:260px;width:1px;height:19px;background:#d0d0d0"></div>
<div class="a" style="left:95px;top:260px;width:1px;height:19px;background:#d0d0d0"></div>
<div class="t" style="left:16px;top:263px;font-size:13px">Fusebit I</div>
<div class="t" style="left:97px;top:263px;font-size:13px;letter-spacing:0.15px">0:SPI enabled</div>
<div class="a" style="left:0;top:299px;width:497px;height:1px;background:#d0d0d0"></div>
<div class="a" style="left:14px;top:280px;width:1px;height:19px;background:#d0d0d0"></div>
<div class="a" style="left:95px;top:280px;width:1px;height:19px;background:#d0d0d0"></div>
<div class="t" style="left:16px;top:283px;font-size:13px">Fusebit H</div>
<div class="t" style="left:97px;top:283px;font-size:13px;letter-spacing:0.15px">1:Watchdog timer always on disabled</div>
<div class="a" style="left:0;top:319px;width:497px;height:1px;background:#d0d0d0"></div>
<div class="a" style="left:14px;top:300px;width:1px;height:19px;background:#d0d0d0"></div>
<div class="a" style="left:95px;top:300px;width:1px;height:19px;background:#d0d0d0"></div>
<div class="t" style="left:16px;top:303px;font-size:13px">Fusebit GFE</div>
<div class="t" style="left:97px;top:303px;font-size:13px;letter-spacing:0.15px">111:BOD disabled</div>
<div class="a" style="left:0;top:339px;width:497px;height:1px;background:#d0d0d0"></div>
<div class="a" style="left:14px;top:320px;width:1px;height:19px;background:#d0d0d0"></div>
<div class="a" style="left:95px;top:320px;width:1px;height:19px;background:#d0d0d0"></div>
<div class="t" style="left:16px;top:323px;font-size:13px">Fusebit D</div>
<div class="t" style="left:97px;top:323px;font-size:13px;letter-spacing:0.15px">1:External Reset enabled</div>
<div class="a" style="left:0;top:359px;width:497px;height:1px;background:#d0d0d0"></div>


</div>
<!-- scrollbar -->
<div class="a" style="left:837px;top:194px;width:16px;height:347px;background:#d4d0c8"></div>
<div class="rb" style="left:837px;top:194px;width:16px;height:16px"></div>
<div class="a" style="left:841px;top:200px;width:0;height:0;border-left:4px solid transparent;border-right:4px solid transparent;border-bottom:4px solid #000"></div>
<div class="a" style="left:837px;top:210px;width:16px;height:17px;background-image:repeating-conic-gradient(#fff 0 25%,#d4d0c8 0 50%);background-size:2px 2px"></div>
<div class="rb" style="left:837px;top:227px;width:16px;height:297px"></div>
<div class="rb" style="left:837px;top:524px;width:16px;height:16px"></div>
<div class="a" style="left:841px;top:530px;width:0;height:0;border-left:4px solid transparent;border-right:4px solid transparent;border-top:4px solid #000"></div>

<!-- button panel -->
<div class="a" style="left:855px;top:192px;width:106px;height:350px;border-top:1px solid #fff;border-left:1px solid #fff;border-right:1px solid #404040;border-bottom:1px solid #404040;box-shadow:inset -1px -1px 0 #808080"></div>
<div class="rb" style="left:869px;top:200px;width:75px;height:25px"></div>
<div class="t" style="left:883px;top:207px;font-size:13px">Refresh</div>
<div class="rb" style="left:871px;top:232px;width:73px;height:25px"></div>
<div class="t" style="left:882px;top:239px;font-size:13px;color:#808080;text-shadow:1px 1px 0 #fff">Write LB</div>
<div class="rb" style="left:871px;top:272px;width:73px;height:25px"></div>
<div class="t" style="left:882px;top:279px;font-size:13px;color:#808080;text-shadow:1px 1px 0 #fff">Write FS</div>
<div class="rb" style="left:871px;top:312px;width:73px;height:25px"></div>
<div class="t" style="left:876px;top:319px;font-size:13px;color:#808080;text-shadow:1px 1px 0 #fff">Write FSH</div>
<div class="rb" style="left:871px;top:352px;width:73px;height:25px"></div>
<div class="t" style="left:876px;top:359px;font-size:13px;color:#808080;text-shadow:1px 1px 0 #fff">Write FSE</div>
<div class="rb" style="left:871px;top:392px;width:73px;height:25px"></div>
<div class="t" style="left:876px;top:399px;font-size:13px">Write PRG</div>

<!-- status -->

<div class="a" style="left:334px;top:546px;width:630px;height:27px;border-top:1px solid #fff;border-left:1px solid #fff;border-right:1px solid #808080;border-bottom:1px solid #808080"></div>
<div class="t" style="left:335px;top:553px;font-size:13.5px">Sample Electronics AVR programmer</div>
<div class="sunk" style="left:334px;top:575px;width:150px;height:21px"></div>
<div class="t" style="left:336px;top:581px;font-size:11px;letter-spacing:-0.5px">3874 ROM</div>
<div class="sunk" style="left:486px;top:575px;width:149px;height:21px"></div>
<div class="t" style="left:488px;top:581px;font-size:11px;letter-spacing:-0.5px">0 EPROM</div>
<div class="sunk" style="left:636px;top:575px;width:328px;height:21px"></div>
<div class="t" style="left:638px;top:581px;font-size:11px;letter-spacing:-0.45px">ANALOGOWO-CYFROWY ANALIZATOR WIDMA.BIN</div>
<svg class="a" style="left:951px;top:583px" width="12" height="12" viewBox="0 0 12 12"><path d="M11 0L0 11M11 4L4 11M11 8L8 11" stroke="#808080" stroke-width="1"/><path d="M12 1L1 12M12 5L5 12M12 9L9 12" stroke="#fff" stroke-width="1"/></svg>

</div>

</body></html>
